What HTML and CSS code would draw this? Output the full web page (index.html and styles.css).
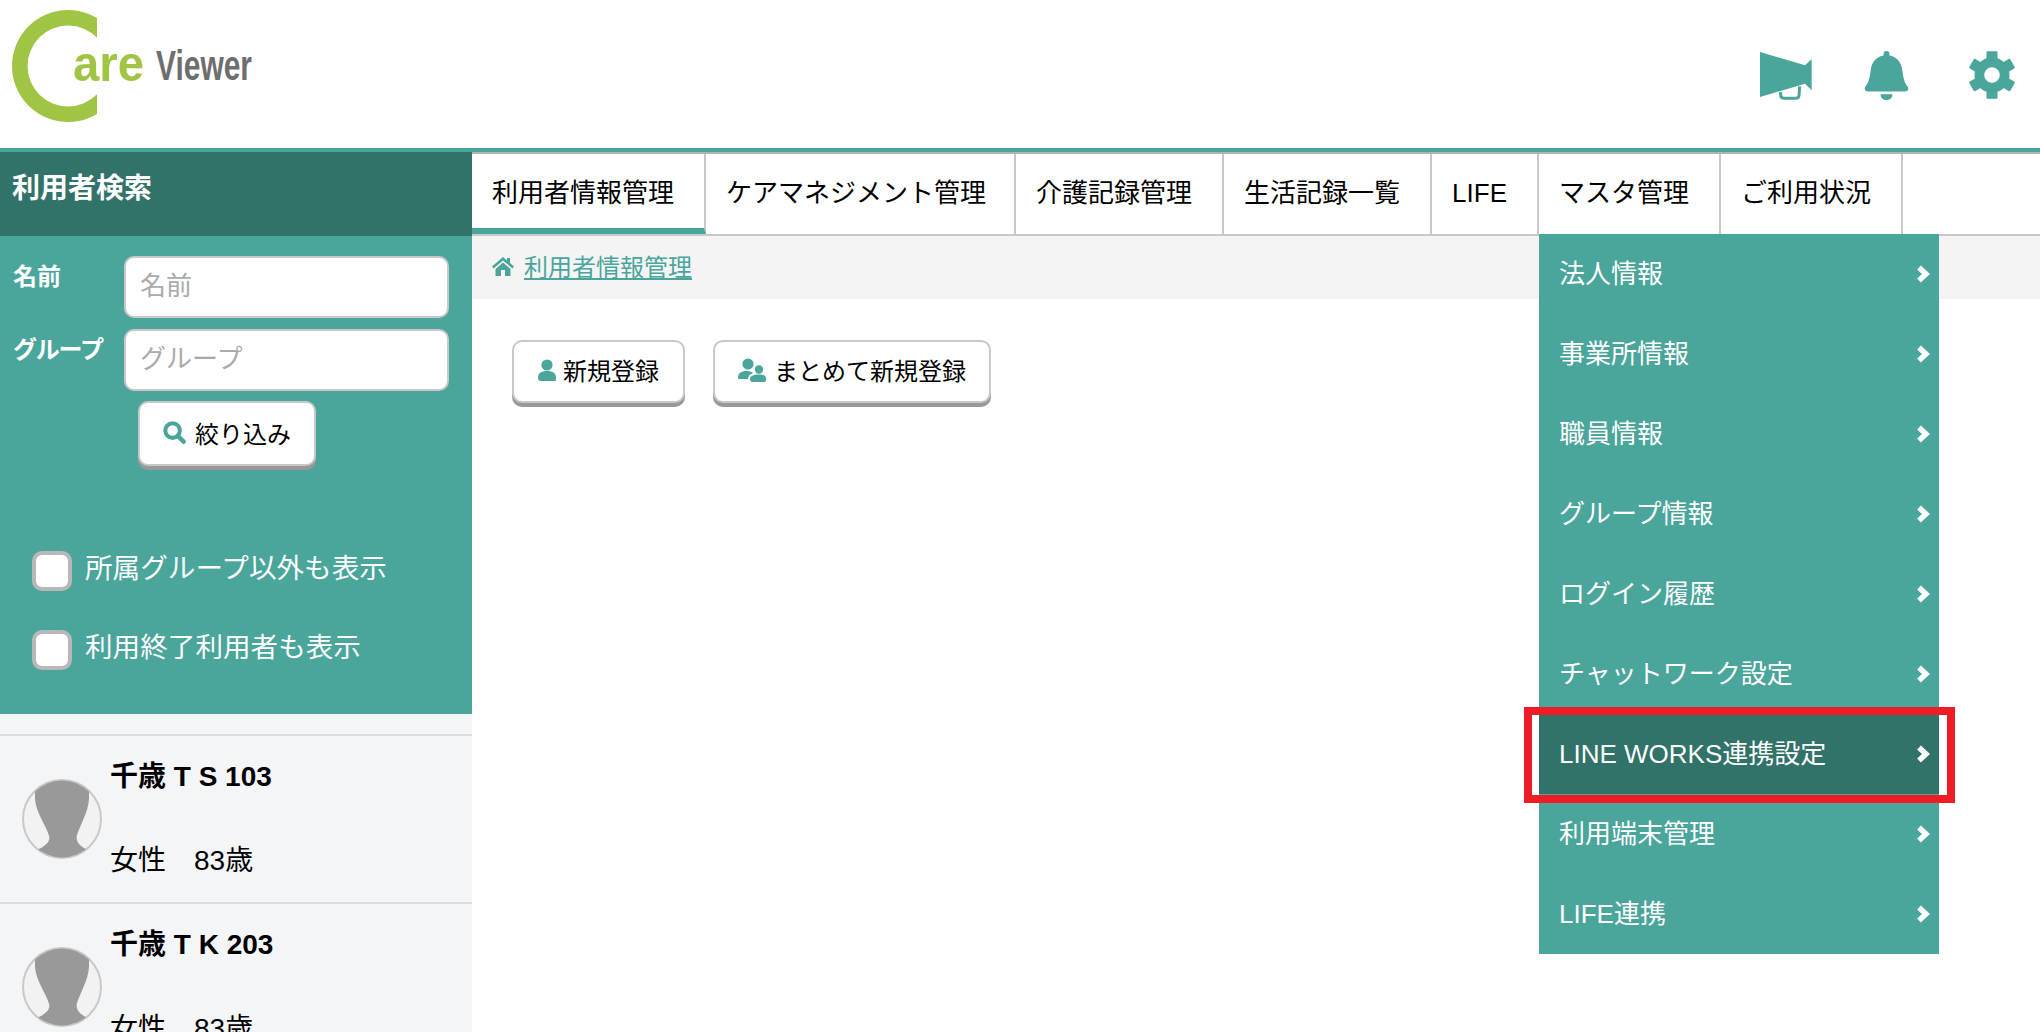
FILE: index.html
```html
<!DOCTYPE html>
<html lang="ja">
<head>
<meta charset="utf-8">
<title>Care Viewer</title>
<link rel="stylesheet" href="styles.css">
</head>
<body>
<header class="header">
  <svg class="logo" viewBox="0 0 300 140" width="300" height="140" aria-label="Care Viewer">
    <path class="logo-c" d="M97 18.1A56 56 0 1 0 97 113.9V94.3A40.5 40.5 0 1 1 97 37.7Z"/>
    <text class="logo-are" x="73" y="81" textLength="71" lengthAdjust="spacingAndGlyphs">are</text>
    <text class="logo-viewer" x="156" y="80" textLength="96" lengthAdjust="spacingAndGlyphs">Viewer</text>
  </svg>
  <div class="header-icons">
    <svg class="ico-mega" viewBox="120 92 156 150" width="52" height="50">
      <path d="M120 95 255 135 275 117V210L255 190 120 230Z"/>
      <path class="mega-handle" d="M182 215V224Q182 234 192 234H228Q236 234 237 226L239 198" />
    </svg>
    <svg class="ico-bell" viewBox="432 88 136 154" width="45" height="51">
      <circle cx="500" cy="100" r="9"/>
      <path d="M500 104C470 104 455 125 452 150 449 175 445 188 436 199 431 207 436 213 445 213H555C564 213 569 207 564 199 555 188 551 175 548 150 545 125 530 104 500 104Z"/>
      <path d="M482 222H518A18 18 0 0 1 482 222Z"/>
    </svg>
    <svg class="ico-gear" viewBox="-74 -74 148 148" width="48" height="48">
      <circle class="gear-ring" r="39"/>
      <rect x="-17" y="-73" width="34" height="26" rx="4"/>
      <rect x="-17" y="-73" width="34" height="26" rx="4" transform="rotate(60)"/>
      <rect x="-17" y="-73" width="34" height="26" rx="4" transform="rotate(120)"/>
      <rect x="-17" y="-73" width="34" height="26" rx="4" transform="rotate(180)"/>
      <rect x="-17" y="-73" width="34" height="26" rx="4" transform="rotate(240)"/>
      <rect x="-17" y="-73" width="34" height="26" rx="4" transform="rotate(300)"/>
    </svg>
  </div>
</header>

<div class="layout">
  <aside class="sidebar">
    <h2 class="side-title">利用者検索</h2>
    <form class="search">
      <div class="field-grid">
        <label class="field-label">名前</label>
        <input class="field-input" type="text" placeholder="名前">
        <label class="field-label field-label-tight">グループ</label>
        <input class="field-input" type="text" placeholder="グループ">
      </div>
      <button class="btn btn-search" type="button">
        <svg class="btn-ico" viewBox="0 0 24 24" width="23" height="23"><circle cx="10" cy="10" r="7.6" class="search-ring"/><path class="search-handle" d="M15.5 15.5 21.5 21.5"/></svg>
        絞り込み
      </button>
      <label class="check-row"><span class="check"></span>所属グループ以外も表示</label>
      <label class="check-row"><span class="check"></span>利用終了利用者も表示</label>
    </form>
    <ul class="people">
      <li class="person">
        <svg class="avatar" viewBox="0 0 80 80" width="80" height="80">
          <defs><clipPath id="av"><circle cx="40" cy="40" r="38.5"/></clipPath></defs>
          <circle class="avatar-bg" cx="40" cy="40" r="39"/>
          <path class="avatar-fig" clip-path="url(#av)" d="M13 0H67V20C66 34 58 46 55 56 53 63 59 68 66 71L50 84H30L15 71C22 68 29 63 27 57 24 46 14 34 13 20Z"/>
        </svg>
        <div class="person-text">
          <div class="person-name">千歳 T S 103</div>
          <div class="person-meta">女性　83歳</div>
        </div>
      </li>
      <li class="person">
        <svg class="avatar" viewBox="0 0 80 80" width="80" height="80">
          <circle class="avatar-bg" cx="40" cy="40" r="39"/>
          <path class="avatar-fig" clip-path="url(#av)" d="M13 0H67V20C66 34 58 46 55 56 53 63 59 68 66 71L50 84H30L15 71C22 68 29 63 27 57 24 46 14 34 13 20Z"/>
        </svg>
        <div class="person-text">
          <div class="person-name">千歳 T K 203</div>
          <div class="person-meta">女性　83歳</div>
        </div>
      </li>
    </ul>
  </aside>

  <main class="main">
    <nav class="tabs">
      <a class="tab tab-active">利用者情報管理</a>
      <a class="tab tab-care">ケアマネジメント管理</a>
      <a class="tab">介護記録管理</a>
      <a class="tab">生活記録一覧</a>
      <a class="tab">LIFE</a>
      <div class="tab tab-open">マスタ管理
        <ul class="menu">
          <li class="menu-item">法人情報<svg class="chev" viewBox="0 0 14 20" width="14" height="20"><path d="M3 3.500 10 10 3 16.500"/></svg></li>
          <li class="menu-item">事業所情報<svg class="chev" viewBox="0 0 14 20" width="14" height="20"><path d="M3 3.500 10 10 3 16.500"/></svg></li>
          <li class="menu-item">職員情報<svg class="chev" viewBox="0 0 14 20" width="14" height="20"><path d="M3 3.500 10 10 3 16.500"/></svg></li>
          <li class="menu-item">グループ情報<svg class="chev" viewBox="0 0 14 20" width="14" height="20"><path d="M3 3.500 10 10 3 16.500"/></svg></li>
          <li class="menu-item">ログイン履歴<svg class="chev" viewBox="0 0 14 20" width="14" height="20"><path d="M3 3.500 10 10 3 16.500"/></svg></li>
          <li class="menu-item">チャットワーク設定<svg class="chev" viewBox="0 0 14 20" width="14" height="20"><path d="M3 3.500 10 10 3 16.500"/></svg></li>
          <li class="menu-item menu-hot">LINE WORKS連携設定<svg class="chev" viewBox="0 0 14 20" width="14" height="20"><path d="M3 3.500 10 10 3 16.500"/></svg><span class="callout"></span></li>
          <li class="menu-item">利用端末管理<svg class="chev" viewBox="0 0 14 20" width="14" height="20"><path d="M3 3.500 10 10 3 16.500"/></svg></li>
          <li class="menu-item">LIFE連携<svg class="chev" viewBox="0 0 14 20" width="14" height="20"><path d="M3 3.500 10 10 3 16.500"/></svg></li>
        </ul>
      </div>
      <a class="tab">ご利用状況</a>
    </nav>
    <div class="crumb">
      <svg class="crumb-ico" viewBox="0 0 24 20" width="24" height="20"><path d="M12 1 1 10.500 2.600 12.400 12 4.400 21.400 12.400 23 10.500 19 7V2H16V4.400ZM4.500 13V20H10V14H14V20H19.500V13L12 6.600Z"/></svg>
      <a class="crumb-link">利用者情報管理</a>
    </div>
    <div class="actions">
      <button class="btn btn-new" type="button">
        <svg class="btn-ico" viewBox="0 0 18 22" width="18" height="22"><circle cx="9" cy="6" r="5.600"/><path d="M0 19C0 14 3 12 9 12S18 14 18 19 17 22 15 22H3C1 22 0 21 0 19Z"/></svg>
        新規登録
      </button>
      <button class="btn btn-bulk" type="button">
        <svg class="btn-ico" viewBox="0 0 28 24" width="28" height="24"><circle cx="10" cy="6" r="5.600"/><path d="M0 20C0 15 3 13 9 13 12 13 14 14 15 15 12 16 10 18 10 21H2C1 21 0 21 0 20Z"/><circle cx="21" cy="11.500" r="4.200"/><path d="M12 21C12 18 15 16.500 21 16.500S28 18 28 21 27 24 26 24H14C13 24 12 23 12 21Z"/></svg>
        まとめて新規登録
      </button>
    </div>
  </main>
</div>
</body>
</html>
```

FILE: styles.css
```css
* { box-sizing: border-box; }
html, body { margin: 0; height: 1032px; overflow: hidden; background: #fff; }
body { font-family: "Liberation Sans", "Noto Sans CJK JP", sans-serif; color: #000; }
ul { list-style: none; margin: 0; padding: 0; }

.header {
  height: 152px;
  border-bottom: 4px solid #4aa59b;
  display: flex;
  justify-content: space-between;
}
.logo { display: block; }
.logo-c { fill: #a0c544; }
.logo-are { font: 700 50px "Liberation Sans", sans-serif; fill: #a0c544; }
.logo-viewer { font: 700 43px "Liberation Sans", sans-serif; fill: #6e6e6e; }
.header-icons { display: flex; align-items: flex-start; padding: 51px 24px 0 0; }
.header-icons svg { fill: #4aa59b; display: block; }
.ico-mega { margin-right: 52px; }
.ico-bell { margin-right: 59px; margin-top: -1px; }
.mega-handle { fill: none; stroke: #4aa59b; stroke-width: 9; }
.gear-ring { fill: none; stroke: #4aa59b; stroke-width: 30; }

.layout { display: grid; grid-template-columns: 472px 1fr; height: 880px; }

.sidebar { height: 880px; overflow: hidden; background: #fff; }
.side-title {
  margin: 0;
  height: 84px;
  padding-left: 12px;
  background: #317269;
  color: #fff;
  font-size: 28px;
  font-weight: 700;
  line-height: 74px;
}
.search {
  height: 478px;
  padding: 20px 0 0 13px;
  background: #4aa59b;
  color: #fff;
}
.field-grid {
  display: grid;
  grid-template-columns: 111px 325px;
  row-gap: 11px;
}
.field-label { font-size: 24px; font-weight: 700; line-height: 42px; }
.field-label-tight { letter-spacing: -1.2px; }
.field-input {
  height: 62px;
  width: 325px;
  padding: 0 14px 1px;
  border: 2px solid #c8c8c8;
  border-radius: 10px;
  background: #fff;
  font: 26px "Liberation Sans", "Noto Sans CJK JP", sans-serif;
  outline: none;
}
.field-input::placeholder { color: #aaa; opacity: 1; }

.btn {
  display: inline-flex;
  align-items: center;
  justify-content: center;
  background: #fff;
  border: 2px solid #c8c8c8;
  border-radius: 10px;
  box-shadow: 0 4px 0 #999;
  color: #000;
  font: 24px "Liberation Sans", "Noto Sans CJK JP", sans-serif;
  padding: 0 0 4px;
}
.btn-ico { fill: #4aa59b; display: block; flex: none; }
.search-ring { fill: none; stroke: #4aa59b; stroke-width: 4.2; }
.search-handle { fill: none; stroke: #4aa59b; stroke-width: 4.6; stroke-linecap: round; }
.btn-search { display: flex; width: 178px; height: 65px; margin: 10px 0 0 125px; gap: 9px; padding-bottom: 3px; }

.check-row {
  display: flex;
  align-items: flex-start;
  height: 40px;
  margin-left: 19px;
  font-size: 27.6px;
  line-height: 35px;
  color: #fff;
}
.btn-search + .check-row { margin-top: 85px; }
.check-row + .check-row { margin-top: 39px; }
.check {
  width: 40px;
  height: 40px;
  margin-right: 13px;
  border: 4px solid #b8b8b8;
  border-radius: 10px;
  background: #fff;
  flex: none;
}

.people { background: #f4f5f7; padding-top: 20px; height: 318px; }
.person {
  height: 168px;
  border-top: 2px solid #dcdcde;
  display: flex;
  padding-left: 22px;
}
.avatar { display: block; margin: 43px 8px 0 0; flex: none; }
.avatar-bg { fill: #f2f2f2; stroke: #c8c8c8; stroke-width: 2; }
.avatar-fig { fill: #999; }
.person-text { padding-top: 21px; font-size: 28px; line-height: 40px; }
.person-name { font-weight: 700; }
.person-meta { margin-top: 44px; }

.main { min-width: 0; }
.tabs {
  display: flex;
  height: 84px;
  border-top: 2px solid #b4b4b4;
  border-bottom: 2px solid #c8c8c8;
}
.tab {
  position: relative;
  height: 80px;
  padding: 0 30px 0 20px;
  border-right: 2px solid #c8c8c8;
  font-size: 26px;
  line-height: 79px;
  white-space: nowrap;
}
.tab-care { padding-right: 28px; }
.tab-active { border-bottom: 6px solid #4aa59b; }

.menu {
  position: absolute;
  top: 100%;
  left: 0;
  width: 400px;
  background: #4aa59b;
  z-index: 5;
}
.menu-item {
  position: relative;
  display: flex;
  justify-content: space-between;
  align-items: center;
  height: 80px;
  padding: 0 9px 0 20px;
  color: #fff;
  font-size: 26px;
  line-height: 1;
}
.menu-hot { background: #317269; }
.chev { fill: none; stroke: #fff; stroke-width: 5.5; display: block; }
.callout {
  position: absolute;
  left: -15px;
  right: -16px;
  top: -7px;
  height: 96px;
  border: 8px solid #ee1c25;
  pointer-events: none;
}

.crumb {
  display: flex;
  align-items: center;
  height: 63px;
  padding: 0 0 4px 19px;
  background: #f4f4f4;
  gap: 9px;
}
.crumb-ico { fill: #4aa59b; display: block; }
.crumb-link { color: #4aa59b; font-size: 24px; text-decoration: underline; }

.actions { display: flex; align-items: flex-start; padding: 41px 0 0 40px; gap: 28px; }
.btn-new { width: 173px; height: 63px; gap: 7px; }
.btn-bulk { width: 278px; height: 63px; gap: 8px; }
```
